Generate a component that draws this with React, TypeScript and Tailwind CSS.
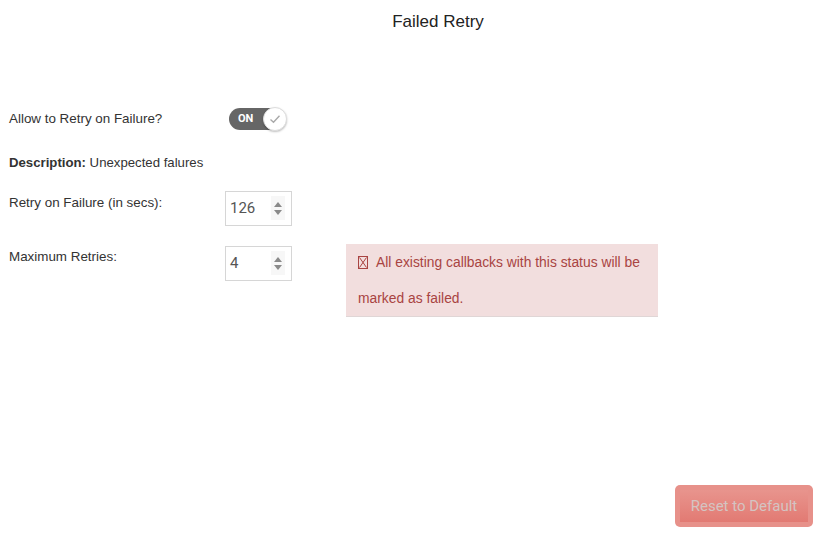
import React from "react";

const Spinner = () => (
  <div className="flex flex-col items-center justify-center gap-[3px] w-[14px] h-[24px] bg-[#f7f7f7]">
    <div className="w-0 h-0 border-l-[4px] border-r-[4px] border-b-[5px] border-l-transparent border-r-transparent border-b-[#8a8a8a]"></div>
    <div className="w-0 h-0 border-l-[4px] border-r-[4px] border-t-[5px] border-l-transparent border-r-transparent border-t-[#8a8a8a]"></div>
  </div>
);

const NumberBox = ({ value }: { value: string }) => (
  <div className="w-[67px] h-[35px] border border-[#d6d6d6] flex flex-row items-center justify-between pl-[4px] pr-[6px]">
    <span className="font-['Roboto'] text-[15px] text-[#555]">{value}</span>
    <Spinner />
  </div>
);

const App = () => {
  return (
    <div className="w-[834px] h-[545px] bg-white font-['Liberation_Sans',Arial,sans-serif] text-[#333] relative flex flex-col">
      <h1 className="text-[17px] text-[#222] text-center pl-[42px] pt-[12px] leading-[20px]">
        Failed Retry
      </h1>

      <div className="flex flex-row items-center mt-[76px] pl-[9px]">
        <span className="text-[13.4px] w-[220px]">Allow to Retry on Failure?</span>
        <div className="w-[57px] h-[22px] rounded-full bg-[#666] flex flex-row items-center justify-between pl-[9px] relative">
          <span className="font-['Roboto'] text-[11px] font-bold text-white">ON</span>
          <div className="absolute right-[-1px] top-[-1px] w-[24px] h-[24px] rounded-full bg-white border border-[#ddd] shadow-[0_1px_2px_rgba(0,0,0,0.25)] flex items-center justify-center">
            <svg width="12" height="10" viewBox="0 0 12 10">
              <path d="M1.5 5.5 L4.5 8.2 L10.5 1.8" fill="none" stroke="#a9a9a9" strokeWidth="1.4" />
            </svg>
          </div>
        </div>
      </div>

      <p className="text-[13.2px] pl-[9px] mt-[23px]">
        <b className="font-bold">Description:</b> Unexpected falures
      </p>

      <div className="flex flex-row items-start pl-[9px] mt-[18px]">
        <span className="text-[13.4px] w-[216px] pt-[2px]">Retry on Failure (in secs):</span>
        <NumberBox value="126" />
      </div>

      <div className="flex flex-row items-start pl-[9px] mt-[20px]">
        <span className="text-[13.4px] w-[216px] pt-[1px]">Maximum Retries:</span>
        <NumberBox value="4" />
        <div className="ml-[54px] mt-[-2px] w-[312px] h-[73px] bg-[#f2dede] border-b border-[#e0d6d6] text-[#a94442] text-[13.85px] leading-[36px] px-[12px]">
          <span className="inline-block w-[10px] h-[13px] border border-[#a94442] relative align-[-2px] mr-[8px] overflow-hidden">
            <svg className="absolute inset-0" width="8" height="11" viewBox="0 0 8 11">
              <path d="M0.5 0.5 L7.5 10.5 M7.5 0.5 L0.5 10.5" stroke="#a94442" strokeWidth="1" />
            </svg>
          </span>
          All existing callbacks with this status will be marked as failed.
        </div>
      </div>

      <div className="flex-1"></div>
      <div className="flex flex-row justify-end pr-[21px] pb-[18px]">
        <button className="w-[138px] h-[42px] rounded-[5px] bg-[#e7918a] p-[5px]">
          <div className="w-full h-full bg-gradient-to-b from-[#e8948d] to-[#e27a73] flex items-center justify-center font-['Roboto'] text-[15px] text-[#d4c4c2]">
            Reset to Default
          </div>
        </button>
      </div>
    </div>
  );
};

export default App;
